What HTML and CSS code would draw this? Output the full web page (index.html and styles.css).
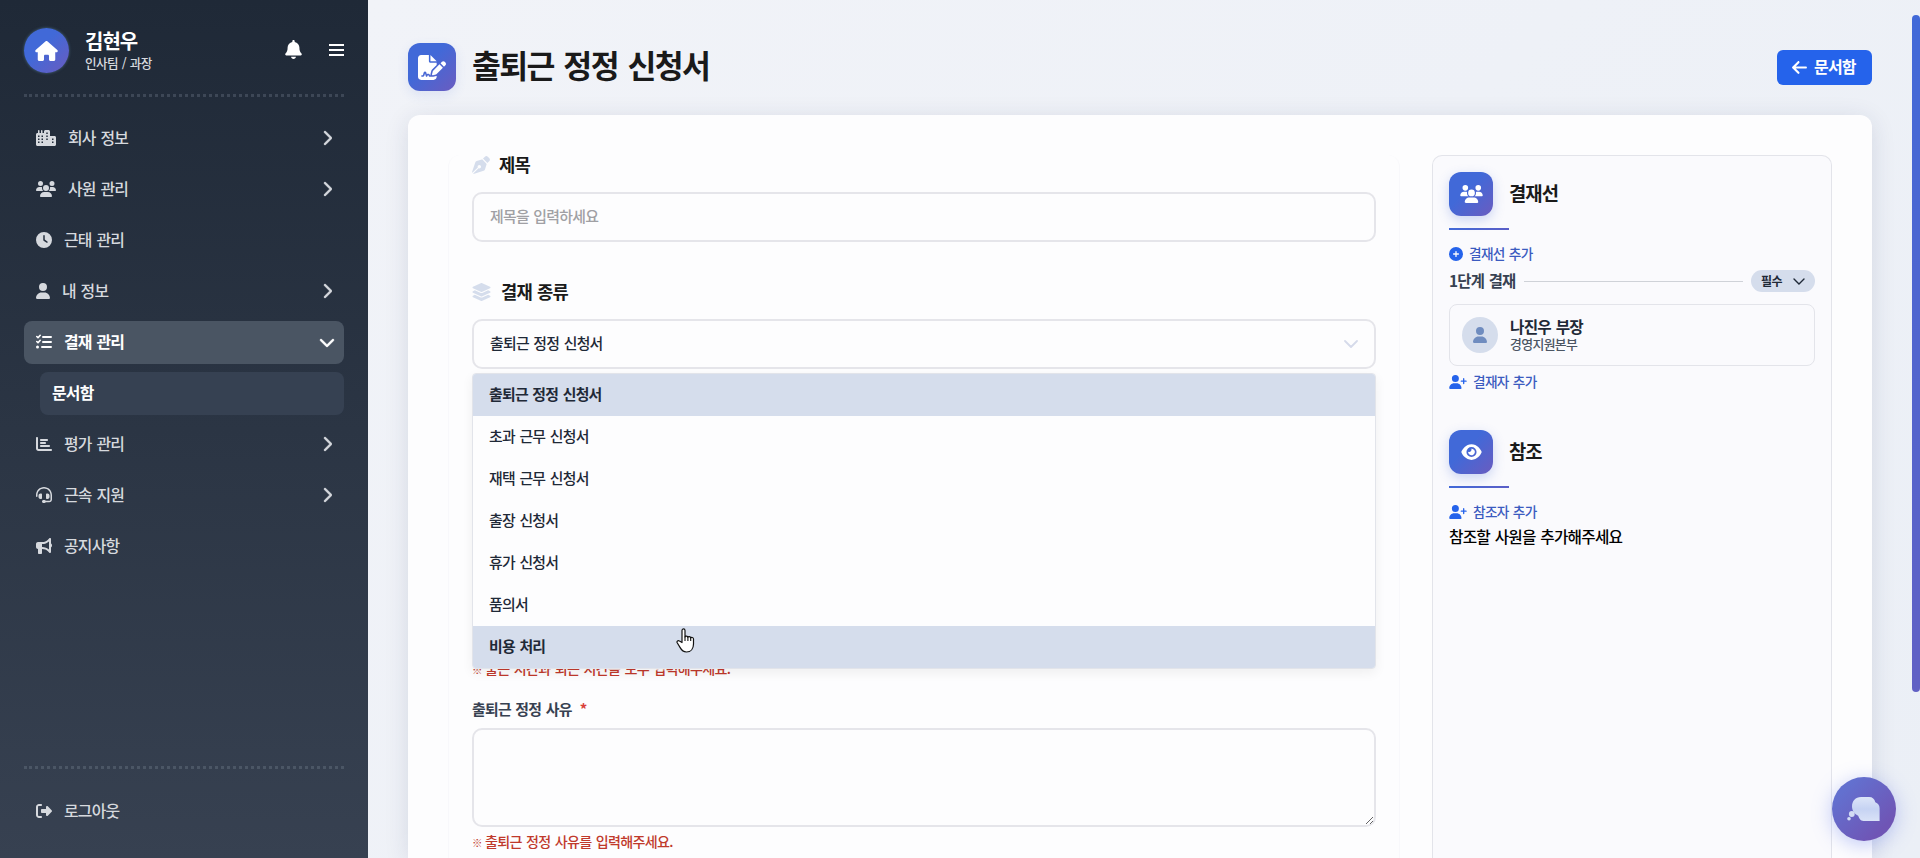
FILE: index.html
```html
<!DOCTYPE html>
<html lang="ko">
<head>
    <meta charset="UTF-8">
    <meta name="viewport" content="width=device-width, initial-scale=1.0">
    <title>출퇴근 정정 신청서</title>
    <link rel="stylesheet" href="styles.css">
</head>
<body>
    <!-- icon sprite -->
    <svg class="sprite" xmlns="http://www.w3.org/2000/svg">
        <symbol id="house" viewBox="0 0 576 512"><path d="M575.8 255.5c0 18-15 32.1-32 32.1h-32l.7 160.2c0 2.7-.2 5.4-.5 8.1V472c0 22.1-17.9 40-40 40H456c-1.1 0-2.2 0-3.3-.1c-1.4 .1-2.8 .1-4.2 .1H416 392c-22.1 0-40-17.9-40-40V448 384c0-17.7-14.3-32-32-32H256c-17.7 0-32 14.3-32 32v64 24c0 22.1-17.9 40-40 40H160 128.1c-1.5 0-3-.1-4.5-.2c-1.2 .1-2.4 .2-3.6 .2H104c-22.1 0-40-17.9-40-40V360c0-.9 0-1.9 .1-2.8V287.6H32c-18 0-32-14-32-32.1c0-9 3-17 10-24L266.4 8c7-7 15-8 22-8s15 2 21 7L564.8 231.5c8 7 12 15 11 24z"/></symbol>
        <symbol id="bell" viewBox="0 0 448 512"><path d="M224 0c-17.7 0-32 14.3-32 32V51.2C119 66 64 130.6 64 208v18.8c0 47-17.3 92.4-48.5 127.6l-7.4 8.3c-8.4 9.4-10.4 22.9-5.3 34.4S19.4 416 32 416H416c12.6 0 24-7.4 29.2-18.9s3.1-25-5.3-34.4l-7.4-8.3C401.3 319.2 384 273.9 384 226.8V208c0-77.4-55-142-128-156.8V32c0-17.7-14.3-32-32-32zm45.3 493.3c12-12 18.7-28.3 18.7-45.3H224 160c0 17 6.7 33.3 18.7 45.3s28.3 18.7 45.3 18.7s33.3-6.7 45.3-18.7z"/></symbol>
        <symbol id="city" viewBox="0 0 640 512"><path fill-rule="evenodd" d="M64 24a24 24 0 0 1 48 0V96h48V24a24 24 0 0 1 48 0V96h48V48c0-26.500 21.500-48 48-48h96c26.500 0 48 21.500 48 48V192h144c26.500 0 48 21.500 48 48V464c0 26.500-21.500 48-48 48H48c-26.500 0-48-21.500-48-48V144c0-26.500 21.500-48 48-48H64zM64 176v48h48v-48zM64 272v48h48v-48zM64 368v48h48v-48zM176 176v48h48v-48zM176 272v48h48v-48zM176 368v48h48v-48zM328 80v48h48v-48zM328 176v48h48v-48zM328 272v48h48v-48zM512 272v48h48v-48zM512 368v48h48v-48z"/></symbol>
        <symbol id="users" viewBox="0 0 640 512"><path d="M144 0a80 80 0 1 1 0 160A80 80 0 1 1 144 0zM512 0a80 80 0 1 1 0 160A80 80 0 1 1 512 0zM0 298.7C0 239.8 47.8 192 106.7 192h42.7c15.900 0 31 3.500 44.600 9.700c-1.300 7.200-1.900 14.700-1.900 22.300c0 38.200 16.800 72.500 43.300 96c-.2 0-.4 0-.7 0H21.300C9.600 320 0 310.400 0 298.700zM405.300 320c-.2 0-.4 0-.7 0c26.600-23.500 43.300-57.800 43.300-96c0-7.600-.7-15-1.900-22.300c13.600-6.300 28.700-9.700 44.600-9.700h42.700C592.200 192 640 239.800 640 298.700c0 11.800-9.600 21.300-21.300 21.300H405.300zM224 224a96 96 0 1 1 192 0 96 96 0 1 1 -192 0zM128 485.300C128 411.700 187.700 352 261.300 352H378.700C452.300 352 512 411.700 512 485.300c0 14.700-11.900 26.700-26.700 26.700H154.700c-14.700 0-26.700-11.900-26.700-26.700z"/></symbol>
        <symbol id="clock" viewBox="0 0 512 512"><path d="M256 0a256 256 0 1 1 0 512A256 256 0 1 1 256 0zM232 120V256c0 8 4 15.500 10.700 20l96 64c11 7.400 25.900 4.400 33.300-6.700s4.400-25.900-6.700-33.300L280 243.200V120c0-13.300-10.700-24-24-24s-24 10.700-24 24z"/></symbol>
        <symbol id="user" viewBox="0 0 448 512"><path d="M224 256A128 128 0 1 0 224 0a128 128 0 1 0 0 256zm-45.700 48C79.800 304 0 383.800 0 482.300C0 498.700 13.300 512 29.700 512H418.300c16.400 0 29.700-13.300 29.700-29.700C448 383.800 368.200 304 269.700 304H178.300z"/></symbol>
        <symbol id="list-check" viewBox="0 0 512 512"><path fill="none" stroke="currentColor" stroke-width="52" stroke-linecap="round" stroke-linejoin="round" d="M26 80l38 40 70-80M26 240l38 40 70-80"/><circle cx="48" cy="416" r="48"/><path fill="none" stroke="currentColor" stroke-width="64" stroke-linecap="round" d="M224 96H480M224 256H480M192 416H480"/></symbol>
        <symbol id="chart" viewBox="0 0 512 512"><path d="M32 32c17.700 0 32 14.300 32 32V400c0 8.800 7.200 16 16 16H480c17.700 0 32 14.300 32 32s-14.300 32-32 32H80c-44.200 0-80-35.800-80-80V64C0 46.300 14.300 32 32 32zm96 96c0-17.700 14.300-32 32-32l192 0c17.700 0 32 14.300 32 32s-14.300 32-32 32H160c-17.700 0-32-14.300-32-32zm32 64H288c17.700 0 32 14.300 32 32s-14.300 32-32 32H160c-17.700 0-32-14.300-32-32s14.300-32 32-32zm0 96H416c17.700 0 32 14.300 32 32s-14.300 32-32 32H160c-17.700 0-32-14.300-32-32s14.300-32 32-32z"/></symbol>
        <symbol id="headset" viewBox="0 0 512 512"><path d="M256 48C141.100 48 48 141.100 48 256v40c0 13.300-10.700 24-24 24s-24-10.700-24-24V256C0 114.600 114.600 0 256 0S512 114.600 512 256V400.100c0 48.600-39.400 88-88.100 88L313.600 488c-8.300 14.300-23.800 24-41.600 24H240c-26.500 0-48-21.500-48-48s21.500-48 48-48h32c17.800 0 33.300 9.700 41.600 24l110.400 .1c22.100 0 40-17.900 40-40V256c0-114.900-93.100-208-208-208zM144 208h16c17.700 0 32 14.300 32 32V352c0 17.700-14.300 32-32 32H144c-35.300 0-64-28.700-64-64V272c0-35.300 28.700-64 64-64zm224 0c35.300 0 64 28.700 64 64v48c0 35.300-28.700 64-64 64H352c-17.700 0-32-14.300-32-32V240c0-17.700 14.300-32 32-32h16z"/></symbol>
        <symbol id="bullhorn" viewBox="0 0 512 512"><path d="M480 32c0-12.900-7.800-24.600-19.800-29.600s-25.700-2.200-34.900 6.900L381.700 53c-48 48-113.100 75-181 75H192 160 64c-35.300 0-64 28.700-64 64v96c0 35.300 28.700 64 64 64l0 128c0 17.700 14.300 32 32 32h64c17.700 0 32-14.300 32-32V352l8.700 0c67.900 0 133 27 181 75l43.600 43.600c9.200 9.200 22.900 11.900 34.900 6.900s19.800-16.600 19.800-29.600V300.400c18.600-8.800 32-32.500 32-60.400s-13.400-51.600-32-60.400V32zm-64 76.700V240 371.300C357.200 317.800 280.500 288 200.700 288H192V192h8.700c79.800 0 156.500-29.800 215.300-83.300z"/></symbol>
        <symbol id="logout" viewBox="0 0 512 512"><path d="M377.900 105.900L500.700 228.700c7.200 7.200 11.300 17.100 11.300 27.300s-4.100 20.100-11.300 27.300L377.900 406.100c-6.400 6.400-15 9.900-24 9.900c-18.700 0-33.900-15.200-33.900-33.900l0-62.100-128 0c-17.700 0-32-14.300-32-32l0-64c0-17.700 14.300-32 32-32l128 0 0-62.100c0-18.700 15.200-33.900 33.900-33.900c9 0 17.600 3.600 24 9.900zM160 96L96 96c-17.700 0-32 14.300-32 32l0 256c0 17.700 14.300 32 32 32l64 0c17.700 0 32 14.300 32 32s-14.300 32-32 32l-64 0c-53 0-96-43-96-96L0 128C0 75 43 32 96 32l64 0c17.700 0 32 14.300 32 32s-14.300 32-32 32z"/></symbol>
        <symbol id="chevron-right" viewBox="0 0 320 512"><path d="M310.600 233.400c12.500 12.500 12.500 32.800 0 45.300l-192 192c-12.500 12.500-32.800 12.500-45.300 0s-12.500-32.800 0-45.300L242.700 256 73.400 86.600c-12.500-12.500-12.500-32.800 0-45.300s32.800-12.500 45.300 0l192 192z"/></symbol>
        <symbol id="chevron-down" viewBox="0 0 512 512"><path d="M233.400 406.600c12.500 12.500 32.800 12.500 45.300 0l192-192c12.500-12.500 12.500-32.800 0-45.300s-32.800-12.500-45.300 0L256 338.700 86.600 169.400c-12.500-12.500-32.800-12.500-45.300 0s-12.500 32.800 0 45.300l192 192z"/></symbol>
        <symbol id="file-signature" viewBox="0 0 576 512"><path d="M64 0C28.700 0 0 28.700 0 64V448c0 35.300 28.700 64 64 64H320c35.300 0 64-28.700 64-64V428.700c-2.700 1.100-5.400 2-8.200 2.700l-60.100 15c-3 .7-6 1.200-9 1.400c-.9 .1-1.800 .2-2.700 .2H240c-6.100 0-11.600-3.400-14.300-8.800l-8.800-17.700c-1.700-3.400-5.100-5.500-8.800-5.500s-7.200 2.100-8.800 5.500l-8.800 17.700c-2.900 5.900-9.200 9.400-15.700 8.800s-12.100-5.100-13.900-11.300L144 381l-9.800 32.800c-6.100 20.300-24.800 34.200-46 34.200H80c-8.800 0-16-7.200-16-16s7.200-16 16-16h8.200c7.100 0 13.300-4.600 15.300-11.400l14.900-49.500c3.400-11.300 13.800-19.100 25.600-19.100s22.200 7.700 25.600 19.100l11.600 38.600c7.400-6.200 16.800-9.700 26.800-9.700c15.900 0 30.400 9 37.500 23.200l4.400 8.800h8.900c-3.100-8.800-3.700-18.400-1.400-27.800l15-60.100c2.800-11.300 8.600-21.500 16.800-29.700L384 203.600V160H256c-17.700 0-32-14.300-32-32V0H64zM256 0V128H384L256 0zM549.800 139.700c-15.600-15.600-40.900-15.600-56.600 0l-29.400 29.400 71 71 29.400-29.400c15.600-15.600 15.600-40.900 0-56.600l-14.400-14.400zM311.900 321c-4.100 4.100-7 9.200-8.400 14.900l-15 60.100c-1.400 5.500 .2 11.200 4.200 15.200s9.700 5.600 15.200 4.200l60.100-15c5.600-1.400 10.800-4.300 14.900-8.400L512.100 262.700l-71-71L311.900 321z"/></symbol>
        <symbol id="arrow-left" viewBox="0 0 448 512"><path d="M9.400 233.400c-12.500 12.500-12.500 32.800 0 45.300l160 160c12.500 12.500 32.800 12.500 45.300 0s12.500-32.800 0-45.300L109.200 288 416 288c17.700 0 32-14.300 32-32s-14.300-32-32-32l-306.700 0L214.600 118.600c12.500-12.500 12.500-32.800 0-45.300s-32.800-12.500-45.300 0l-160 160z"/></symbol>
        <symbol id="pen-nib" viewBox="0 0 512 512"><path d="M368.400 18.300L312.700 74.100 437.900 199.300l55.700-55.700c21.900-21.900 21.900-57.300 0-79.200L447.600 18.300c-21.900-21.900-57.300-21.900-79.200 0zM288 94.600l-9.200 2.800L134.700 140.600c-19.900 6-35.700 21.200-42.300 41L3.800 445.800c-3.800 11.300-1 23.900 7.300 32.400L164.700 324.700c-3-6.300-4.700-13.300-4.700-20.700c0-26.500 21.500-48 48-48s48 21.500 48 48s-21.500 48-48 48c-7.400 0-14.400-1.700-20.700-4.700L33.700 500.900c8.600 8.300 21.100 11.200 32.400 7.300l264.300-88.600c19.700-6.600 35-22.400 41-42.300l43.200-144.100 2.700-9.200L288 94.600z"/></symbol>
        <symbol id="layers" viewBox="32 0 512 512"><path d="M264.500 5.200c14.900-6.900 32.100-6.900 47 0l218.600 101c8.500 3.900 13.900 12.400 13.900 21.800s-5.400 17.900-13.900 21.800l-218.600 101c-14.900 6.900-32.100 6.900-47 0L45.900 149.800C37.400 145.800 32 137.300 32 128s5.400-17.900 13.900-21.800L264.500 5.200zM476.900 209.600l53.200 24.600c8.500 3.900 13.900 12.400 13.900 21.800s-5.400 17.900-13.900 21.800l-218.600 101c-14.900 6.900-32.100 6.900-47 0L45.900 277.800C37.400 273.800 32 265.300 32 256s5.400-17.900 13.900-21.800l53.200-24.600 152 70.200c23.400 10.800 50.400 10.800 73.800 0l152-70.200zm-152 198.200l152-70.200 53.200 24.600c8.500 3.900 13.900 12.400 13.900 21.800s-5.400 17.900-13.900 21.800l-218.600 101c-14.900 6.900-32.100 6.900-47 0L45.900 405.800C37.400 401.800 32 393.300 32 384s5.400-17.900 13.900-21.800l53.200-24.600 152 70.200c23.400 10.800 50.400 10.800 73.800 0z"/></symbol>
        <symbol id="circle-plus" viewBox="0 0 512 512"><path d="M256 512A256 256 0 1 0 256 0a256 256 0 1 0 0 512zM232 344V280H168c-13.300 0-24-10.700-24-24s10.700-24 24-24h64V168c0-13.300 10.700-24 24-24s24 10.700 24 24v64h64c13.300 0 24 10.700 24 24s-10.700 24-24 24H280v64c0 13.300-10.700 24-24 24s-24-10.700-24-24z"/></symbol>
        <symbol id="user-plus" viewBox="0 0 640 512"><path d="M96 128a128 128 0 1 1 256 0A128 128 0 1 1 96 128zM0 482.300C0 383.800 79.800 304 178.300 304h91.400C368.200 304 448 383.800 448 482.300c0 16.400-13.300 29.700-29.700 29.700H29.700C13.300 512 0 498.700 0 482.300zM504 312V248H440c-13.300 0-24-10.700-24-24s10.700-24 24-24h64V136c0-13.300 10.700-24 24-24s24 10.700 24 24v64h64c13.300 0 24 10.700 24 24s-10.700 24-24 24H552v64c0 13.300-10.700 24-24 24s-24-10.700-24-24z"/></symbol>
        <symbol id="eye" viewBox="0 0 576 512"><path d="M288 32c-80.800 0-145.500 36.800-192.600 80.600C48.600 156 17.300 208 2.500 243.700c-3.300 7.900-3.300 16.700 0 24.600C17.300 304 48.600 356 95.400 399.400C142.500 443.200 207.200 480 288 480s145.500-36.800 192.600-80.600c46.800-43.500 78.100-95.400 93-131.100c3.300-7.900 3.300-16.700 0-24.600c-14.900-35.700-46.200-87.700-93-131.100C433.500 68.800 368.800 32 288 32zM144 256a144 144 0 1 1 288 0 144 144 0 1 1 -288 0zm144-64c0 35.300-28.700 64-64 64c-7.100 0-13.900-1.200-20.300-3.300c-5.500-1.800-11.900 1.600-11.700 7.400c.3 6.900 1.300 13.800 3.200 20.700c13.700 51.200 66.400 81.600 117.600 67.900s81.600-66.400 67.900-117.600c-11.100-41.500-47.800-69.400-88.600-71.100c-5.800-.2-9.200 6.100-7.400 11.700c2.100 6.400 3.300 13.200 3.300 20.300z"/></symbol>
    </svg>

    <div class="layout">
        <aside class="sidebar">
            <div class="profile">
                <div class="avatar"><svg width="23" height="20"><use href="#house"/></svg></div>
                <div class="profile-text">
                    <div class="profile-name">김현우</div>
                    <div class="profile-dept">인사팀 / 과장</div>
                </div>
                <svg class="bell" width="17" height="19"><use href="#bell"/></svg>
                <div class="burger"><span></span><span></span><span></span></div>
            </div>
            <nav class="menu">
                <a class="menu-item"><svg width="20" height="16"><use href="#city"/></svg><span>회사 정보</span><svg class="arrow" width="10" height="16"><use href="#chevron-right"/></svg></a>
                <a class="menu-item"><svg width="20" height="16"><use href="#users"/></svg><span>사원 관리</span><svg class="arrow" width="10" height="16"><use href="#chevron-right"/></svg></a>
                <a class="menu-item"><svg width="16" height="16"><use href="#clock"/></svg><span>근태 관리</span></a>
                <a class="menu-item"><svg width="14" height="16"><use href="#user"/></svg><span>내 정보</span><svg class="arrow" width="10" height="16"><use href="#chevron-right"/></svg></a>
                <a class="menu-item active"><svg width="16" height="16"><use href="#list-check"/></svg><span>결재 관리</span><svg class="arrow down" width="16" height="16"><use href="#chevron-down"/></svg></a>
                <a class="menu-item sub"><span>문서함</span></a>
                <a class="menu-item"><svg width="16" height="16"><use href="#chart"/></svg><span>평가 관리</span><svg class="arrow" width="10" height="16"><use href="#chevron-right"/></svg></a>
                <a class="menu-item"><svg width="16" height="16"><use href="#headset"/></svg><span>근속 지원</span><svg class="arrow" width="10" height="16"><use href="#chevron-right"/></svg></a>
                <a class="menu-item"><svg width="16" height="16"><use href="#bullhorn"/></svg><span>공지사항</span></a>
            </nav>
            <div class="logout">
                <a class="menu-item"><svg width="16" height="16"><use href="#logout"/></svg><span>로그아웃</span></a>
            </div>
        </aside>

        <main class="main">
            <header class="page-header">
                <div class="page-icon"><svg width="28" height="25"><use href="#file-signature"/></svg></div>
                <h1>출퇴근 정정 신청서</h1>
                <button class="back-btn"><svg width="15" height="17"><use href="#arrow-left"/></svg><span>문서함</span></button>
            </header>

            <div class="card">
                <section class="form">
                    <div class="form-label"><svg width="18" height="18"><use href="#pen-nib"/></svg><span>제목</span></div>
                    <input class="text-input" type="text" placeholder="제목을 입력하세요">

                    <div class="form-label second"><svg width="19" height="18"><use href="#layers"/></svg><span>결재 종류</span></div>
                    <div class="select">
                        <div class="select-box"><span>출퇴근 정정 신청서</span>
                            <svg width="14" height="8" viewBox="0 0 14 8"><path d="M1 1l6 6 6-6" fill="none" stroke="#d5daea" stroke-width="1.800" stroke-linecap="round" stroke-linejoin="round"/></svg>
                        </div>
                        <ul class="options">
                            <li class="on">출퇴근 정정 신청서</li>
                            <li>초과 근무 신청서</li>
                            <li>재택 근무 신청서</li>
                            <li>출장 신청서</li>
                            <li>휴가 신청서</li>
                            <li>품의서</li>
                            <li class="on">비용 처리</li>
                        </ul>
                    </div>

                    <p class="error time-error"><span>※</span>출근 시간과 퇴근 시간을 모두 입력해주세요.</p>
                    <div class="field-label">출퇴근 정정 사유<em>*</em></div>
                    <textarea class="reason"></textarea>
                    <p class="error"><span>※</span>출퇴근 정정 사유를 입력해주세요.</p>
                </section>

                <aside class="approval">
                    <div class="approval-head">
                        <div class="approval-icon"><svg width="23" height="18"><use href="#users"/></svg></div>
                        <h2>결재선</h2>
                    </div>
                    <a class="add-link"><svg width="14" height="14"><use href="#circle-plus"/></svg><span>결재선 추가</span></a>
                    <div class="step">
                        <span>1단계 결재</span>
                        <i></i>
                        <div class="pill"><span>필수</span><svg width="12" height="7" viewBox="0 0 12 7"><path d="M1 1l5 5 5-5" fill="none" stroke="#1f2937" stroke-width="1.400" stroke-linecap="round"/></svg></div>
                    </div>
                    <div class="person">
                        <div class="person-icon"><svg width="14" height="16"><use href="#user"/></svg></div>
                        <div>
                            <div class="person-name">나진우 부장</div>
                            <div class="person-dept">경영지원본부</div>
                        </div>
                    </div>
                    <a class="add-link"><svg width="18" height="14"><use href="#user-plus"/></svg><span>결재자 추가</span></a>

                    <div class="approval-head reference">
                        <div class="approval-icon"><svg width="21" height="18"><use href="#eye"/></svg></div>
                        <h2>참조</h2>
                    </div>
                    <a class="add-link"><svg width="18" height="14"><use href="#user-plus"/></svg><span>참조자 추가</span></a>
                    <p class="empty">참조할 사원을 추가해주세요</p>
                </aside>
            </div>
        </main>
    </div>

    <div class="scroll-thumb"></div>

    <div class="chat-btn">
        <svg width="34" height="28" viewBox="0 0 34 28">
            <defs>
                <linearGradient id="bubble" x1="0" y1="0" x2="0" y2="1">
                    <stop offset="0" stop-color="#dde6f8"/>
                    <stop offset=".5" stop-color="#c6d3f3"/>
                    <stop offset="1" stop-color="#d9e2f7"/>
                </linearGradient>
            </defs>
            <path fill="url(#bubble)" d="M14 2h8c3.500 0 5.600 2 6.300 5.300 2.700 1 4.300 3.200 4.300 5.900V26H16.500c-3.300 0-4.200-2.500-5.300-5.200C7.800 19 5 16 5 11.500 5 6 8.500 2 14 2z"/>
            <circle fill="#d3dcf4" cx="4.800" cy="19" r="2.900"/>
            <circle fill="#d3dcf4" cx="2" cy="23.700" r="1.800"/>
        </svg>
    </div>

    <svg class="cursor" width="20" height="26" viewBox="0 0 20 26">
        <path fill="#fff" stroke="#111" stroke-width="1.200" stroke-linejoin="round" d="M6 14.500V2.600C6 .4 9 .4 9 2.600V9c.2-1.300 2.700-1.200 2.900.3.400-1.100 2.600-.9 2.800.6.500-.9 2.800-.6 2.800 1.200V16c0 4.500-2.500 8-7 8-3.500 0-5-1.800-6.500-4.600L1.200 14.800c-.8-1.600.9-2.800 2.300-1.700z"/>
        <path fill="none" stroke="#111" stroke-width="1.100" d="M9 8.500V13M11.900 9.300V13M14.700 10V13"/>
    </svg>
</body>
</html>
```
FILE: styles.css
```css
* {
    margin: 0;
    padding: 0;
    box-sizing: border-box;
    letter-spacing: -0.05em;
    word-spacing: 0.07em;
}

body {
    height: 100vh;
    overflow: hidden;
    font-family: "Noto Sans CJK KR", "Noto Sans CJK JP", sans-serif;
    color: #1a1a1a;
}

svg {
    fill: currentColor;
    flex-shrink: 0;
}

.sprite {
    display: none;
}

.layout {
    display: flex;
    height: 100vh;
}

/* sidebar */
.sidebar {
    width: 368px;
    flex-shrink: 0;
    display: flex;
    flex-direction: column;
    padding: 28px 24px 25px;
    background: linear-gradient(180deg, #1f2937 0%, #374151 100%);
    color: #d6d9de;
}

.profile {
    display: flex;
    align-items: center;
    height: 69px;
    padding-bottom: 21px;
    border-bottom: 3px dotted #3d4756;
    color: #fff;
}

.avatar {
    width: 45px;
    height: 45px;
    display: flex;
    align-items: center;
    justify-content: center;
    border-radius: 50%;
    background: linear-gradient(135deg, #4169d8 40%, #6a5cc0 100%);
    box-shadow: 0 0 3px rgba(110, 170, 200, 0.5);
}

.profile-text {
    flex: 1;
    margin-left: 16px;
}

.profile-name {
    font-size: 20px;
    font-weight: 700;
    line-height: 23px;
}

.profile-dept {
    margin-top: 1px;
    font-size: 12.6px;
    line-height: 20px;
    color: #d6d9de;
    font-weight: 500;
}

.bell {
    margin: 0 27px 2px 0;
}

.burger {
    width: 15px;
    display: flex;
    flex-direction: column;
    gap: 3px;
    margin-bottom: 2px;
}

.burger span {
    height: 2px;
    background: #fff;
}

.menu {
    display: flex;
    flex-direction: column;
    gap: 8px;
    margin-top: 20px;
}

.menu-item {
    display: flex;
    align-items: center;
    gap: 12px;
    height: 43px;
    padding: 0 12px 1px;
    border-radius: 8px;
    font-size: 15.9px;
    font-weight: 500;
}

.menu-item span,
.form-label span,
.back-btn span,
.add-link span {
    padding-bottom: 2px;
}

.menu-item .arrow {
    margin-left: auto;
    stroke: currentColor;
    stroke-width: 14px;
}

.menu-item .down {
    margin-right: -3px;
}

.menu-item.active {
    background: #4a5563;
    color: #fff;
    font-weight: 700;
}

.menu-item.sub {
    margin-left: 16px;
    background: #364152;
    color: #fff;
    font-weight: 700;
}

.logout {
    margin-top: auto;
    padding-top: 21px;
    border-top: 3px dotted #4b5665;
}

/* main */
.main {
    flex: 1;
    display: flex;
    flex-direction: column;
    padding: 43px 48px 0 40px;
    background: linear-gradient(135deg, #f1f3f8 0%, #ebeff6 100%);
}

.page-header {
    display: flex;
    align-items: center;
    height: 48px;
}

.page-icon {
    width: 48px;
    height: 48px;
    display: flex;
    align-items: center;
    justify-content: center;
    border-radius: 12px;
    background: linear-gradient(135deg, #4169d8 40%, #6a5cc0 100%);
    color: #fff;
    box-shadow: 0 4px 12px rgba(65, 105, 216, 0.12);
}

h1 {
    margin-left: 16px;
    padding-bottom: 4px;
    font-size: 31.4px;
    line-height: 44px;
}

.back-btn {
    display: flex;
    align-items: center;
    gap: 7px;
    width: 95px;
    height: 35px;
    margin-left: auto;
    padding-left: 15px;
    border: none;
    border-radius: 6px;
    background: #2563eb;
    color: #fff;
    font-family: inherit;
    font-size: 16px;
    font-weight: 700;
    white-space: nowrap;
}

.card {
    flex: 1;
    display: grid;
    grid-template-columns: 952px 400px;
    gap: 32px;
    margin-top: 24px;
    padding: 40px 40px 0;
    border-radius: 12px 12px 0 0;
    background: #fdfdfe;
    box-shadow: 0 4px 24px rgba(30, 40, 80, 0.12);
}

.form {
    padding: 0 23px;
    border: 1px solid #f8f8fb;
    border-width: 0 1px;
    border-radius: 12px 12px 0 0;
}

.form-label {
    display: flex;
    align-items: center;
    gap: 9px;
    height: 21px;
    margin-bottom: 16px;
    padding-bottom: 1px;
    font-size: 17.7px;
    font-weight: 700;
}

.form-label.second {
    margin-top: 40px;
    gap: 10px;
}

.form-label svg {
    color: #d5ddec;
}

.text-input,
.select-box,
.reason {
    display: block;
    width: 100%;
    height: 50px;
    padding: 0 16px 3px;
    border: 2px solid #e5e5ea;
    border-radius: 10px;
    background: #fdfdfe;
    font-family: inherit;
    font-size: 14.9px;
    font-weight: 500;
    color: #1f2937;
}

.text-input::placeholder {
    color: #a0a0a4;
}

.select {
    position: relative;
}

.select-box {
    display: flex;
    align-items: center;
    justify-content: space-between;
    padding-bottom: 0;
}

.select-box span {
    padding-bottom: 4px;
}

.options {
    position: absolute;
    top: 54px;
    left: 0;
    right: 0;
    z-index: 2;
    list-style: none;
    border: 1px solid #e2e4ea;
    border-radius: 4px;
    background: #fdfdfe;
    box-shadow: 0 4px 12px rgba(0, 0, 0, 0.06);
    overflow: hidden;
}

.options li {
    height: 42px;
    padding-left: 16px;
    font-size: 14.9px;
    font-weight: 500;
    line-height: 40px;
    color: #1f2937;
}

.options li.on {
    background: #d5ddec;
    font-weight: 700;
}

.error {
    margin-top: 4px;
    font-size: 14.1px;
    font-weight: 500;
    line-height: 20px;
    color: #c0392b;
}

.error span {
    display: inline-block;
    width: 13px;
    font-size: 10.5px;
    font-weight: 700;
}

.time-error {
    margin-top: 289px;
}

.field-label {
    margin-top: 20px;
    padding-bottom: 4px;
    font-size: 14.9px;
    font-weight: 700;
    line-height: 17px;
    color: #374151;
}

.field-label em {
    margin-left: 8px;
    font-style: normal;
    color: #d9413a;
}

.reason {
    height: 99px;
    margin-top: 7px;
    resize: vertical;
}

/* approval panel */
.approval {
    padding: 16px;
    border: 1px solid #e3e4ea;
    border-bottom: none;
    border-radius: 10px 10px 0 0;
    background: #fafafd;
}

.approval-head {
    display: flex;
    gap: 16px;
    height: 58px;
    position: relative;
}

.approval-head::after {
    content: "";
    position: absolute;
    left: 0;
    bottom: 0;
    width: 60px;
    height: 2px;
    background: linear-gradient(90deg, #4169d8, #5b5fc7);
}

.approval-icon {
    width: 44px;
    height: 44px;
    display: flex;
    align-items: center;
    justify-content: center;
    border-radius: 12px;
    background: linear-gradient(135deg, #4169d8 40%, #6a5cc0 100%);
    color: #fff;
    box-shadow: 0 4px 12px rgba(65, 105, 216, 0.25);
}

h2 {
    font-size: 18.8px;
    line-height: 42px;
}

.add-link {
    display: flex;
    align-items: center;
    gap: 6px;
    height: 20px;
    margin-top: 14px;
    font-size: 13.7px;
    font-weight: 500;
    color: #3b5bc0;
}

.add-link svg {
    color: #2563eb;
}

.step {
    display: flex;
    align-items: center;
    gap: 8px;
    height: 22px;
    margin-top: 6px;
    font-size: 15.4px;
    font-weight: 700;
    color: #374151;
}

.step > span {
    padding-bottom: 2px;
}

.step i {
    flex: 1;
    height: 1px;
    background: #cfd2d8;
}

.pill {
    display: flex;
    align-items: center;
    justify-content: space-between;
    width: 64px;
    height: 22px;
    padding: 0 10px;
    border-radius: 11px;
    background: #d5ddec;
    color: #1f2937;
    font-size: 12px;
}

.pill span {
    padding-bottom: 1px;
}

.person {
    display: flex;
    align-items: center;
    gap: 12px;
    height: 62px;
    margin-top: 12px;
    padding: 0 12px;
    border: 1px solid #e3e4ea;
    border-radius: 8px;
}

.person-icon {
    width: 36px;
    height: 36px;
    display: flex;
    align-items: center;
    justify-content: center;
    border-radius: 50%;
    background: #d5ddec;
    color: #6f8cbf;
}

.person-name {
    font-size: 15.7px;
    font-weight: 700;
    line-height: 18px;
    color: #1f2937;
}

.person-dept {
    font-size: 12.9px;
    font-weight: 500;
    line-height: 16px;
    color: #4b5563;
}

.person + .add-link {
    margin-top: 6px;
}

.reference {
    margin-top: 38px;
}

.empty {
    margin-top: 4px;
    font-size: 15.7px;
    font-weight: 500;
    line-height: 22px;
    color: #000;
}

/* floating parts */
.scroll-thumb {
    position: fixed;
    top: 15px;
    right: 0;
    width: 8px;
    height: 677px;
    border-radius: 4px;
    background: linear-gradient(180deg, #4169d8, #6160c4);
}

.chat-btn {
    position: fixed;
    right: 24px;
    bottom: 17px;
    width: 64px;
    height: 64px;
    display: flex;
    align-items: center;
    justify-content: center;
    border-radius: 50%;
    background: linear-gradient(135deg, #6370cf 20%, #6f55b5 80%);
    box-shadow: 0 4px 20px rgba(102, 126, 234, 0.4);
}

.cursor {
    position: fixed;
    left: 676px;
    top: 628px;
    z-index: 5;
}
```
